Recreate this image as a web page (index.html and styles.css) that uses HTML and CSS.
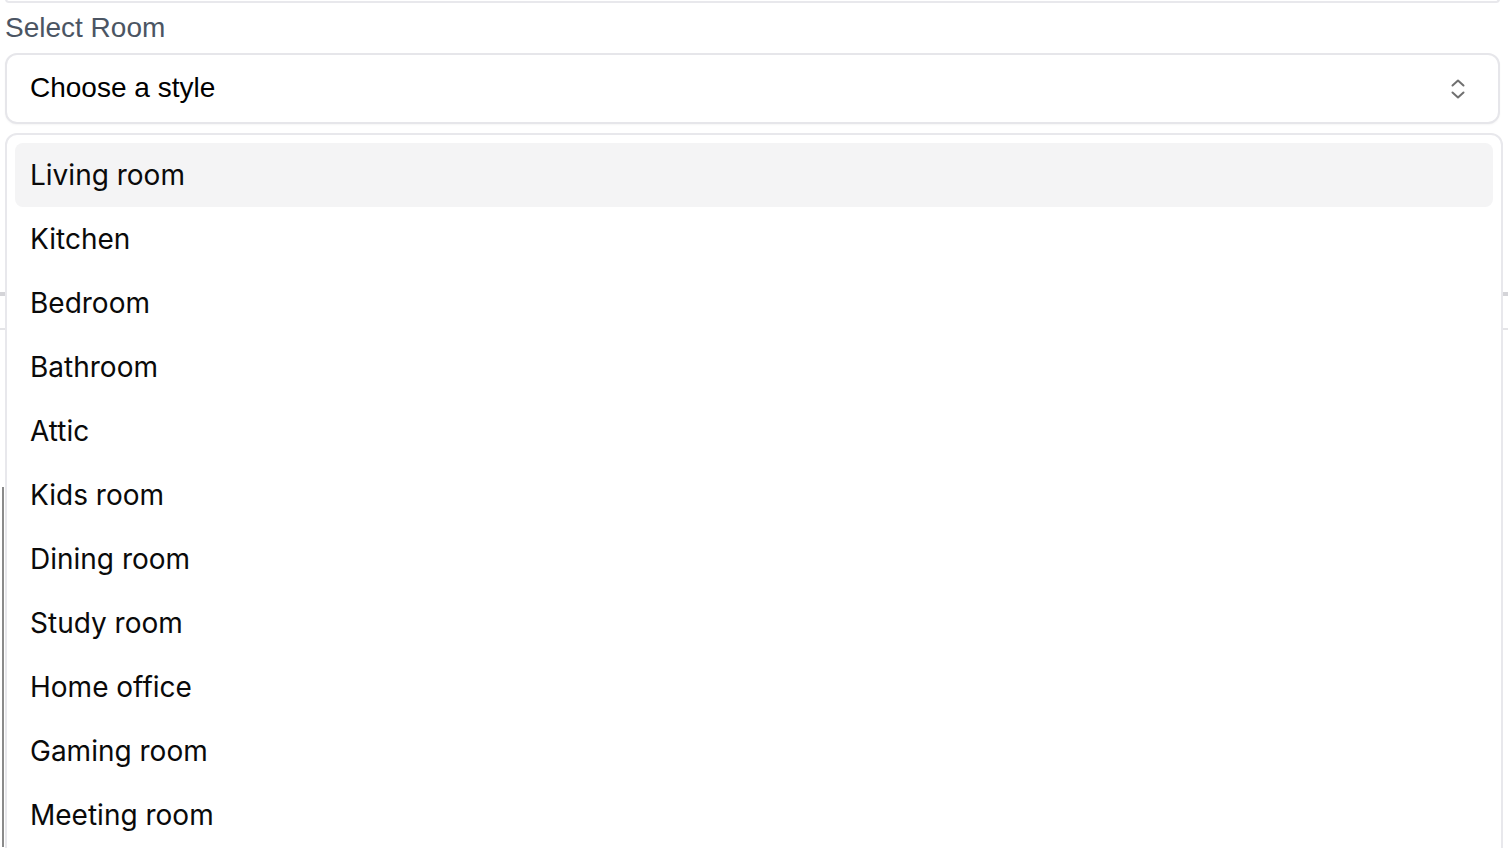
FILE: index.html
```html
<!DOCTYPE html>
<html>
<head>
<meta charset="utf-8">
<link rel="stylesheet" href="styles.css">
</head>
<body>
<div class="page">
  <div class="prev-box"></div>
  <label class="label">Select Room</label>
  <div class="field">
    <button class="select">
      <span class="select-text">Choose a style</span>
      <svg class="chev" width="20" height="24" viewBox="0 0 20 24" fill="none" stroke="#707070" stroke-width="2" stroke-linecap="round" stroke-linejoin="round">
        <path d="M4.5 8.5 L10 3.5 L15.5 8.5"/>
        <path d="M4.5 15.5 L10 20.5 L15.5 15.5"/>
      </svg>
    </button>
    <ul class="menu">
      <li class="opt active">Living room</li>
      <li class="opt">Kitchen</li>
      <li class="opt">Bedroom</li>
      <li class="opt">Bathroom</li>
      <li class="opt">Attic</li>
      <li class="opt">Kids room</li>
      <li class="opt">Dining room</li>
      <li class="opt">Study room</li>
      <li class="opt">Home office</li>
      <li class="opt">Gaming room</li>
      <li class="opt">Meeting room</li>
    </ul>
  </div>
  <div class="behind">
    <div class="rule-a"></div>
    <div class="rule-b"></div>
    <div class="area"></div>
  </div>
</div>
</body>
</html>
```

FILE: styles.css
```css
* { box-sizing: border-box; }
html, body { margin: 0; padding: 0; background: #ffffff; overflow: hidden; }
body { width: 1508px; height: 848px; font-family: "Liberation Sans", Arial, sans-serif; }
.page { padding: 0 8px 0 5px; height: 848px; overflow: hidden; }
.prev-box {
  height: 4px;
  margin-top: -1px;
  border: 2px solid #e8e8ec;
  border-top: none;
  border-radius: 0 0 12px 12px;
}
.label {
  display: block;
  font-size: 28px;
  line-height: 32px;
  color: #4b5563;
  margin-top: 9px;
  margin-bottom: 9px;
}
.field { position: relative; }
.select {
  width: 100%;
  height: 71px;
  display: flex;
  align-items: center;
  justify-content: space-between;
  padding: 0 30px 2px 23px;
  background: #fff;
  border: 2px solid #e6e6ea;
  border-radius: 12px;
  font-family: "Liberation Sans", Arial, sans-serif;
  font-size: 28px;
  color: #000;
  box-shadow: 0 1px 2px rgba(0,0,0,0.04);
}
.select-text { line-height: 32px; }
.chev { display: block; margin-top: 2px; }
.menu {
  position: absolute;
  left: 0;
  right: -3px;
  top: 80px;
  margin: 0;
  padding: 8px;
  list-style: none;
  background: #fff;
  border: 2px solid #e8e8ec;
  border-radius: 12px;
  z-index: 2;
  height: 740px;
}
.opt {
  height: 64px;
  display: flex;
  align-items: center;
  padding-left: 15px;
  border-radius: 8px;
  font-family: Inter, "Noto Sans", sans-serif;
  font-size: 28px;
  color: #0a0a0a;
}
.opt.active { background: #f4f4f5; }
.behind { position: relative; margin-left: -5px; margin-right: -8px; }
.rule-a { margin-top: 168px; height: 4px; background: #d4d4d8; }
.rule-b { margin-top: 32px; height: 2px; background: #e4e4e7; }
.area {
  margin-top: 157px;
  margin-left: 2px;
  height: 360px;
  border-left: 2px solid #8a8a8a;
}
```
